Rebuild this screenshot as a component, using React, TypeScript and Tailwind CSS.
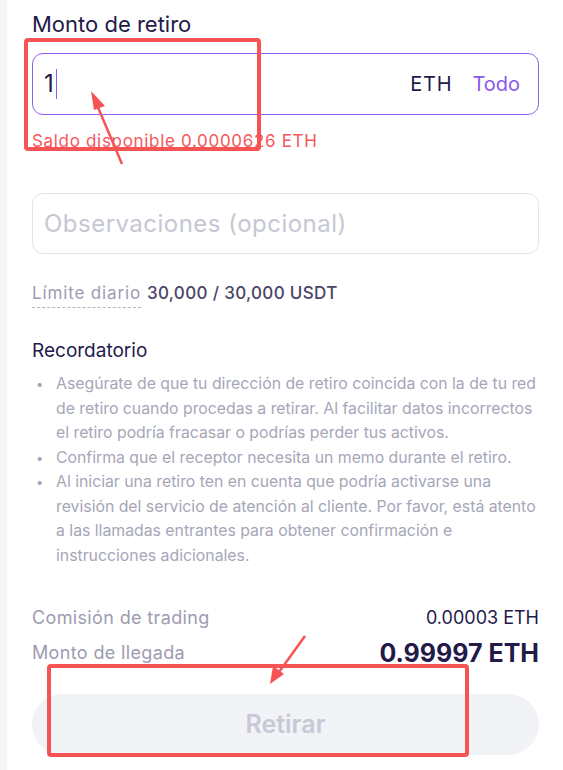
import React from "react";

const notes = [
  "Asegúrate de que tu dirección de retiro coincida con la de tu red de retiro cuando procedas a retirar. Al facilitar datos incorrectos el retiro podría fracasar o podrías perder tus activos.",
  "Confirma que el receptor necesita un memo durante el retiro.",
  "Al iniciar una retiro ten en cuenta que podría activarse una revisión del servicio de atención al cliente. Por favor, está atento a las llamadas entrantes para obtener confirmación e instrucciones adicionales.",
];

function Annotations() {
  // red markup drawn over the screenshot
  return (
    <svg
      className="pointer-events-none absolute left-0 top-0"
      width="563"
      height="770"
      viewBox="0 0 563 770"
    >
      <rect x="26" y="40" width="233" height="109" rx="2" fill="none" stroke="#f65454" strokeWidth="4" />
      <line x1="122" y1="164" x2="97" y2="105" stroke="#f65454" strokeWidth="2.5" />
      <polygon points="91,91 105,106 94,110" fill="#f65454" />
      <rect x="49" y="666" width="418" height="89" rx="2" fill="none" stroke="#f65454" strokeWidth="4" />
      <line x1="305" y1="636" x2="279" y2="672" stroke="#f65454" strokeWidth="2.5" />
      <polygon points="270,684 273,666 284,674" fill="#f65454" />
    </svg>
  );
}

export default function App() {
  return (
    <div
      className="relative flex min-h-[770px] bg-white"
      style={{ fontFamily: "Inter, 'Noto Sans', sans-serif" }}
    >
      <div className="w-[7px] shrink-0 bg-[#f5f5f6]" />
      <div className="flex-1 pl-[25px] pr-[24px]">
        <div className="pt-[10px] text-[22px] leading-[28px] text-[#231a4a]">Monto de retiro</div>

        <div className="mt-[15px] flex h-[62px] items-center rounded-[11px] border-[1.5px] border-[#9260f0] px-[11px]">
          <span className="text-[24px] text-[#231a4a]">1</span>
          <span className="ml-[2px] h-[30px] w-[1.5px] bg-[#9260f0]" />
          <span className="ml-auto text-[20px] tracking-[0.04em] text-[#231a4a]">ETH</span>
          <span className="ml-[20px] mr-[7px] text-[20px] text-[#8a55ec]">Todo</span>
        </div>

        <div className="mt-[15px] text-[17px] leading-[22px] tracking-[0.04em] text-[#f4575c]">
          Saldo disponible 0.0000626 ETH
        </div>

        <div className="mt-[41px] flex h-[61px] items-center rounded-[11px] border border-[#e4e4ea] px-[11px]">
          <span className="text-[24px] tracking-[0.02em] text-[#c6c7d4]">Observaciones (opcional)</span>
        </div>

        <div className="mt-[28px] flex items-center text-[17px] leading-[22px]">
          <span className="border-b border-dashed border-[#b4b4c2] pb-[3px] tracking-[0.05em] text-[#9c9cb1]">
            Límite diario
          </span>
          <span className="ml-[6px] pb-[4px] font-medium tracking-[0.02em] text-[#4a4468]">30,000 / 30,000 USDT</span>
        </div>

        <div className="mt-[31px] text-[19px] leading-[24px] text-[#231a4a]">Recordatorio</div>

        <ul className="mt-[9px] text-[15.8px] leading-[24.5px] text-[#a6a6b8]">
          {notes.map((n) => (
            <li key={n} className="flex">
              <span className="w-[24px] shrink-0 pl-[4px] text-[13px]">•</span>
              <span>{n}</span>
            </li>
          ))}
        </ul>

        <div className="mt-[38px] flex items-center justify-between text-[18px] leading-[24px] tracking-[0.02em]">
          <span className="text-[#9c9cb1]">Comisión de trading</span>
          <span className="tracking-normal text-[#231a4a]">0.00003 ETH</span>
        </div>
        <div className="mt-[10px] flex items-center justify-between leading-[26px]">
          <span className="text-[18px] tracking-[0.02em] text-[#9c9cb1]">Monto de llegada</span>
          <span className="text-[25px] font-bold text-[#231a4a]">0.99997 ETH</span>
        </div>

        <button className="mt-[28px] flex h-[61px] w-full items-center justify-center rounded-full bg-[#f2f3f7] text-[25px] font-semibold text-[#c8c9d6]">
          Retirar
        </button>
      </div>
      <Annotations />
    </div>
  );
}
